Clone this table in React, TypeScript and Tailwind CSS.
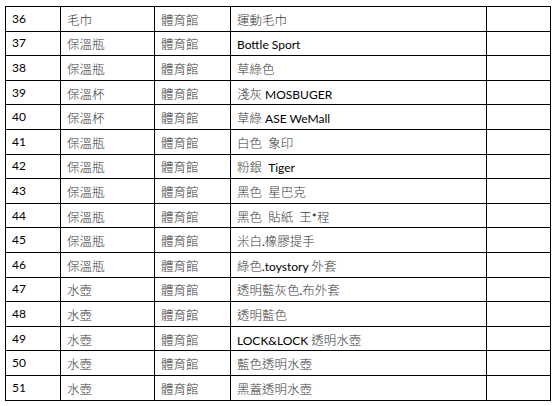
import React from "react";

const rows: [string, string, string, string][] = [
  ["36", "毛巾", "體育館", "運動毛巾"],
  ["37", "保溫瓶", "體育館", "Bottle Sport"],
  ["38", "保溫瓶", "體育館", "草綠色"],
  ["39", "保溫杯", "體育館", "淺灰 MOSBUGER"],
  ["40", "保溫杯", "體育館", "草綠 ASE WeMall"],
  ["41", "保溫瓶", "體育館", "白色  象印"],
  ["42", "保溫瓶", "體育館", "粉銀  Tiger"],
  ["43", "保溫瓶", "體育館", "黑色  星巴克"],
  ["44", "保溫瓶", "體育館", "黑色  貼紙  王*程"],
  ["45", "保溫瓶", "體育館", "米白.橡膠提手"],
  ["46", "保溫瓶", "體育館", "綠色.toystory 外套"],
  ["47", "水壺", "體育館", "透明藍灰色.布外套"],
  ["48", "水壺", "體育館", "透明藍色"],
  ["49", "水壺", "體育館", "LOCK&LOCK 透明水壺"],
  ["50", "水壺", "體育館", "藍色透明水壺"],
  ["51", "水壺", "體育館", "黑蓋透明水壺"],
];

function Mixed({ text }: { text: string }) {
  const parts = text.match(/([\u3000-\u9fff\uff00-\uffef]+|[^\u3000-\u9fff\uff00-\uffef]+)/g) || [];
  return (
    <>
      {parts.map((p, i) =>
        /[\u3000-\u9fff\uff00-\uffef]/.test(p) ? (
          <span key={i} className="font-['Noto_Sans_CJK_TC',sans-serif] text-[12.5px] font-light text-[#3a3a3a]">
            {p}
          </span>
        ) : (
          <span key={i} className="font-['Lato','Noto_Sans_CJK_TC',sans-serif] text-[12px] font-normal text-black">
            {p}
          </span>
        )
      )}
    </>
  );
}

export default function App() {
  return (
    <div className="w-[556px] h-[406px] bg-white pt-[6px] pl-[5px]">
      <table className="border-collapse table-fixed w-[545px]">
        <colgroup>
          <col className="w-[55px]" />
          <col className="w-[94px]" />
          <col className="w-[76px]" />
          <col className="w-[256px]" />
          <col className="w-[64px]" />
        </colgroup>
        <tbody>
          {rows.map((r) => (
            <tr key={r[0]} className="h-[24.6px]">
              <td className="border border-black pl-[6px] py-0 leading-none font-['Lato',sans-serif] text-[12px] font-normal text-black">
                {r[0]}
              </td>
              <td className="border border-black pl-[6px] py-0 leading-none">
                <span className="font-['Noto_Sans_CJK_TC',sans-serif] text-[12.5px] font-light text-[#3a3a3a]">{r[1]}</span>
              </td>
              <td className="border border-black pl-[6px] py-0 leading-none">
                <span className="font-['Noto_Sans_CJK_TC',sans-serif] text-[12.5px] font-light text-[#3a3a3a]">{r[2]}</span>
              </td>
              <td className="border border-black pl-[6px] py-0 leading-none whitespace-pre">
                <Mixed text={r[3]} />
              </td>
              <td className="border border-black p-0"></td>
            </tr>
          ))}
        </tbody>
      </table>
    </div>
  );
}
